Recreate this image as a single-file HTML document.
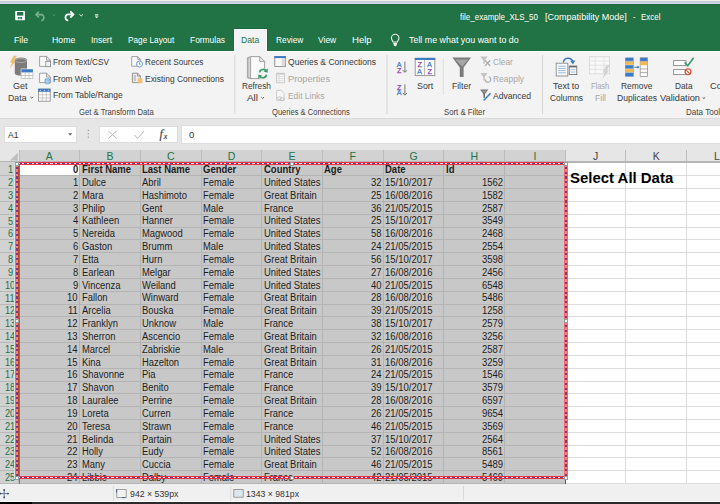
<!DOCTYPE html>
<html><head><meta charset="utf-8"><style>
html,body{margin:0;padding:0;}
body{width:720px;height:504px;overflow:hidden;position:relative;background:#ffffff;font-family:"Liberation Sans", sans-serif;}
.a{position:absolute;}
.t{position:absolute;white-space:pre;line-height:1;transform-origin:0 0;font-family:"Liberation Sans", sans-serif;}
svg{position:absolute;overflow:visible;}
</style></head><body>
<!-- top strip -->
<div class="a" style="left:0;top:0;width:720px;height:1px;background:#efefed"></div>
<div class="a" style="left:0;top:1px;width:720px;height:2px;background:#c3cfdb"></div>
<div class="a" style="left:0;top:3px;width:720px;height:1px;background:#d8d8ee"></div>
<div class="a" style="left:0;top:4px;width:720px;height:47px;background:#217346"></div>
<div class="a" style="left:0;top:4px;width:720px;height:1px;background:#1b6a3c"></div>
<!-- ribbon -->
<div class="a" style="left:0;top:51px;width:720px;height:68px;background:#f3f3f3"></div>
<div class="a" style="left:233px;top:28px;width:35px;height:23px;background:#1c6a3f"></div>
<div class="a" style="left:234px;top:29px;width:33px;height:23px;background:#f3f3f3;box-sizing:border-box;border:1px solid #fafafa;border-bottom:none"></div>
<div class="a" style="left:0;top:51px;width:234px;height:1px;background:#fafafa"></div>
<div class="a" style="left:267px;top:51px;width:453px;height:1px;background:#fafafa"></div>
<div class="a" style="left:0;top:118px;width:720px;height:1px;background:#dadada"></div>
<!-- formula area -->
<div class="a" style="left:0;top:119px;width:720px;height:31px;background:#e6e6e6"></div>
<div class="a" style="left:4px;top:126px;width:73px;height:17px;background:#ffffff;box-sizing:border-box;border:1px solid #dcdcdc"></div>
<div class="a" style="left:99px;top:126px;width:79px;height:17px;background:#ffffff;box-sizing:border-box;border:1px solid #dcdcdc"></div>
<div class="a" style="left:181px;top:125px;width:539px;height:19px;background:#ffffff;box-sizing:border-box;border:1px solid #dcdcdc;border-right:none"></div>
<!-- status bar -->
<div class="a" style="left:0;top:484px;width:720px;height:17px;background:#f0f0f0"></div>
<div class="a" style="left:0;top:501px;width:720px;height:1px;background:#ffffff"></div>
<div class="a" style="left:0;top:502px;width:32px;height:2px;background:#000000"></div>
<div class="a" style="left:32px;top:502px;width:688px;height:2px;background:#2b2b2b"></div>
<div class="a" style="left:463px;top:486px;width:1px;height:14px;background:#d8d8d8"></div>
<div class="a" style="left:19px;top:162px;width:701px;height:322px;background:#ffffff"></div>
<div class="a" style="left:19px;top:162px;width:546.22px;height:322px;background:#c8c8c8"></div>
<div class="a" style="left:19px;top:162px;width:60.69px;height:13px;background:#ffffff"></div>
<div class="a" style="left:0;top:150px;width:720px;height:12px;background:#e6e6e6"></div>
<div class="a" style="left:19px;top:150px;width:546.21px;height:12px;background:#d2d2d2"></div>
<div class="a" style="left:0;top:162px;width:19px;height:322px;background:#d2d2d2"></div>
<div class="a" style="left:19px;top:150px;width:1px;height:12px;background:#bcbcbc"></div>
<div class="a" style="left:79px;top:150px;width:1px;height:12px;background:#bcbcbc"></div>
<div class="a" style="left:79px;top:162px;width:1px;height:322px;background:#b4b4b4"></div>
<div class="a" style="left:140px;top:150px;width:1px;height:12px;background:#bcbcbc"></div>
<div class="a" style="left:140px;top:162px;width:1px;height:322px;background:#b4b4b4"></div>
<div class="a" style="left:201px;top:150px;width:1px;height:12px;background:#bcbcbc"></div>
<div class="a" style="left:201px;top:162px;width:1px;height:322px;background:#b4b4b4"></div>
<div class="a" style="left:261px;top:150px;width:1px;height:12px;background:#bcbcbc"></div>
<div class="a" style="left:261px;top:162px;width:1px;height:322px;background:#b4b4b4"></div>
<div class="a" style="left:322px;top:150px;width:1px;height:12px;background:#bcbcbc"></div>
<div class="a" style="left:322px;top:162px;width:1px;height:322px;background:#b4b4b4"></div>
<div class="a" style="left:383px;top:150px;width:1px;height:12px;background:#bcbcbc"></div>
<div class="a" style="left:383px;top:162px;width:1px;height:322px;background:#b4b4b4"></div>
<div class="a" style="left:443px;top:150px;width:1px;height:12px;background:#bcbcbc"></div>
<div class="a" style="left:443px;top:162px;width:1px;height:322px;background:#b4b4b4"></div>
<div class="a" style="left:504px;top:150px;width:1px;height:12px;background:#bcbcbc"></div>
<div class="a" style="left:504px;top:162px;width:1px;height:322px;background:#b4b4b4"></div>
<div class="a" style="left:565px;top:150px;width:1px;height:12px;background:#bcbcbc"></div>
<div class="a" style="left:625px;top:150px;width:1px;height:12px;background:#bcbcbc"></div>
<div class="a" style="left:625px;top:162px;width:1px;height:322px;background:#dcdcdc"></div>
<div class="a" style="left:686px;top:150px;width:1px;height:12px;background:#bcbcbc"></div>
<div class="a" style="left:686px;top:162px;width:1px;height:322px;background:#dcdcdc"></div>
<div class="a" style="left:0px;top:175px;width:19px;height:1px;background:#b8b8b8"></div>
<div class="a" style="left:19px;top:175px;width:546.21px;height:1px;background:#b4b4b4"></div>
<div class="a" style="left:565.22px;top:175px;width:154.78px;height:1px;background:#dcdcdc"></div>
<div class="a" style="left:0px;top:188px;width:19px;height:1px;background:#b8b8b8"></div>
<div class="a" style="left:19px;top:188px;width:546.21px;height:1px;background:#b4b4b4"></div>
<div class="a" style="left:565.22px;top:188px;width:154.78px;height:1px;background:#dcdcdc"></div>
<div class="a" style="left:0px;top:201px;width:19px;height:1px;background:#b8b8b8"></div>
<div class="a" style="left:19px;top:201px;width:546.21px;height:1px;background:#b4b4b4"></div>
<div class="a" style="left:565.22px;top:201px;width:154.78px;height:1px;background:#dcdcdc"></div>
<div class="a" style="left:0px;top:214px;width:19px;height:1px;background:#b8b8b8"></div>
<div class="a" style="left:19px;top:214px;width:546.21px;height:1px;background:#b4b4b4"></div>
<div class="a" style="left:565.22px;top:214px;width:154.78px;height:1px;background:#dcdcdc"></div>
<div class="a" style="left:0px;top:227px;width:19px;height:1px;background:#b8b8b8"></div>
<div class="a" style="left:19px;top:227px;width:546.21px;height:1px;background:#b4b4b4"></div>
<div class="a" style="left:565.22px;top:227px;width:154.78px;height:1px;background:#dcdcdc"></div>
<div class="a" style="left:0px;top:239px;width:19px;height:1px;background:#b8b8b8"></div>
<div class="a" style="left:19px;top:239px;width:546.21px;height:1px;background:#b4b4b4"></div>
<div class="a" style="left:565.22px;top:239px;width:154.78px;height:1px;background:#dcdcdc"></div>
<div class="a" style="left:0px;top:252px;width:19px;height:1px;background:#b8b8b8"></div>
<div class="a" style="left:19px;top:252px;width:546.21px;height:1px;background:#b4b4b4"></div>
<div class="a" style="left:565.22px;top:252px;width:154.78px;height:1px;background:#dcdcdc"></div>
<div class="a" style="left:0px;top:265px;width:19px;height:1px;background:#b8b8b8"></div>
<div class="a" style="left:19px;top:265px;width:546.21px;height:1px;background:#b4b4b4"></div>
<div class="a" style="left:565.22px;top:265px;width:154.78px;height:1px;background:#dcdcdc"></div>
<div class="a" style="left:0px;top:278px;width:19px;height:1px;background:#b8b8b8"></div>
<div class="a" style="left:19px;top:278px;width:546.21px;height:1px;background:#b4b4b4"></div>
<div class="a" style="left:565.22px;top:278px;width:154.78px;height:1px;background:#dcdcdc"></div>
<div class="a" style="left:0px;top:291px;width:19px;height:1px;background:#b8b8b8"></div>
<div class="a" style="left:19px;top:291px;width:546.21px;height:1px;background:#b4b4b4"></div>
<div class="a" style="left:565.22px;top:291px;width:154.78px;height:1px;background:#dcdcdc"></div>
<div class="a" style="left:0px;top:304px;width:19px;height:1px;background:#b8b8b8"></div>
<div class="a" style="left:19px;top:304px;width:546.21px;height:1px;background:#b4b4b4"></div>
<div class="a" style="left:565.22px;top:304px;width:154.78px;height:1px;background:#dcdcdc"></div>
<div class="a" style="left:0px;top:316px;width:19px;height:1px;background:#b8b8b8"></div>
<div class="a" style="left:19px;top:316px;width:546.21px;height:1px;background:#b4b4b4"></div>
<div class="a" style="left:565.22px;top:316px;width:154.78px;height:1px;background:#dcdcdc"></div>
<div class="a" style="left:0px;top:329px;width:19px;height:1px;background:#b8b8b8"></div>
<div class="a" style="left:19px;top:329px;width:546.21px;height:1px;background:#b4b4b4"></div>
<div class="a" style="left:565.22px;top:329px;width:154.78px;height:1px;background:#dcdcdc"></div>
<div class="a" style="left:0px;top:342px;width:19px;height:1px;background:#b8b8b8"></div>
<div class="a" style="left:19px;top:342px;width:546.21px;height:1px;background:#b4b4b4"></div>
<div class="a" style="left:565.22px;top:342px;width:154.78px;height:1px;background:#dcdcdc"></div>
<div class="a" style="left:0px;top:355px;width:19px;height:1px;background:#b8b8b8"></div>
<div class="a" style="left:19px;top:355px;width:546.21px;height:1px;background:#b4b4b4"></div>
<div class="a" style="left:565.22px;top:355px;width:154.78px;height:1px;background:#dcdcdc"></div>
<div class="a" style="left:0px;top:368px;width:19px;height:1px;background:#b8b8b8"></div>
<div class="a" style="left:19px;top:368px;width:546.21px;height:1px;background:#b4b4b4"></div>
<div class="a" style="left:565.22px;top:368px;width:154.78px;height:1px;background:#dcdcdc"></div>
<div class="a" style="left:0px;top:381px;width:19px;height:1px;background:#b8b8b8"></div>
<div class="a" style="left:19px;top:381px;width:546.21px;height:1px;background:#b4b4b4"></div>
<div class="a" style="left:565.22px;top:381px;width:154.78px;height:1px;background:#dcdcdc"></div>
<div class="a" style="left:0px;top:393px;width:19px;height:1px;background:#b8b8b8"></div>
<div class="a" style="left:19px;top:393px;width:546.21px;height:1px;background:#b4b4b4"></div>
<div class="a" style="left:565.22px;top:393px;width:154.78px;height:1px;background:#dcdcdc"></div>
<div class="a" style="left:0px;top:406px;width:19px;height:1px;background:#b8b8b8"></div>
<div class="a" style="left:19px;top:406px;width:546.21px;height:1px;background:#b4b4b4"></div>
<div class="a" style="left:565.22px;top:406px;width:154.78px;height:1px;background:#dcdcdc"></div>
<div class="a" style="left:0px;top:419px;width:19px;height:1px;background:#b8b8b8"></div>
<div class="a" style="left:19px;top:419px;width:546.21px;height:1px;background:#b4b4b4"></div>
<div class="a" style="left:565.22px;top:419px;width:154.78px;height:1px;background:#dcdcdc"></div>
<div class="a" style="left:0px;top:432px;width:19px;height:1px;background:#b8b8b8"></div>
<div class="a" style="left:19px;top:432px;width:546.21px;height:1px;background:#b4b4b4"></div>
<div class="a" style="left:565.22px;top:432px;width:154.78px;height:1px;background:#dcdcdc"></div>
<div class="a" style="left:0px;top:445px;width:19px;height:1px;background:#b8b8b8"></div>
<div class="a" style="left:19px;top:445px;width:546.21px;height:1px;background:#b4b4b4"></div>
<div class="a" style="left:565.22px;top:445px;width:154.78px;height:1px;background:#dcdcdc"></div>
<div class="a" style="left:0px;top:457px;width:19px;height:1px;background:#b8b8b8"></div>
<div class="a" style="left:19px;top:457px;width:546.21px;height:1px;background:#b4b4b4"></div>
<div class="a" style="left:565.22px;top:457px;width:154.78px;height:1px;background:#dcdcdc"></div>
<div class="a" style="left:0px;top:470px;width:19px;height:1px;background:#b8b8b8"></div>
<div class="a" style="left:19px;top:470px;width:546.21px;height:1px;background:#b4b4b4"></div>
<div class="a" style="left:565.22px;top:470px;width:154.78px;height:1px;background:#dcdcdc"></div>
<div class="a" style="left:0px;top:483px;width:19px;height:1px;background:#b8b8b8"></div>
<div class="a" style="left:19px;top:483px;width:546.21px;height:1px;background:#b4b4b4"></div>
<div class="a" style="left:565.22px;top:483px;width:154.78px;height:1px;background:#dcdcdc"></div>
<div class="a" style="left:0;top:161px;width:720px;height:1px;background:#b4b4b4"></div>
<div class="a" style="left:565px;top:162px;width:155px;height:1px;background:#b4b4b4"></div>
<div class="a" style="left:18px;top:162px;width:1px;height:322px;background:#b4b4b4"></div><svg width="720" height="504" viewBox="0 0 720 504" style="left:0;top:0">
<!-- QAT: save -->
<rect x="15.2" y="11" width="9.8" height="9.2" rx="0.6" fill="#ffffff"/>
<rect x="17.1" y="12" width="6.2" height="3.6" fill="#217346"/>
<rect x="17.9" y="17.1" width="4.2" height="2.1" fill="#217346"/>
<rect x="19.4" y="17.6" width="1" height="1.6" fill="#ffffff"/>
<!-- undo (disabled) -->
<path d="M38.5 12.2 L36 14.6 L38.5 17 M36.3 14.6 H42 A3.3 3.3 0 0 1 42 20.6" fill="none" stroke="#78b08e" stroke-width="1.6" stroke-linecap="round" stroke-linejoin="round"/>
<path d="M52.6 14.4 L54 15.8 L55.4 14.4" fill="none" stroke="#5f9c78" stroke-width="0.9"/>
<!-- redo -->
<path d="M70.8 11.8 L73.6 14.4 L70.8 17 M73.3 14.4 H67.5 A3.2 3.2 0 0 0 67.5 20.4" fill="none" stroke="#fff" stroke-width="1.8" stroke-linecap="round" stroke-linejoin="round"/>
<path d="M79.4 14.3 L81.2 16 L83 14.3" fill="none" stroke="#e6efe9" stroke-width="1"/>
<!-- customize -->
<rect x="95" y="14" width="3.2" height="1" fill="#b8d4c2"/>
<rect x="95" y="15.3" width="3.2" height="1" fill="#b8d4c2"/>
<path d="M95 16.6 H98.3 L96.65 18.3 Z" fill="#fff"/>
<!-- lightbulb -->
<path d="M393 42 C392.7 40.4 391.4 39.6 391.4 38 A3.8 3.8 0 0 1 399 38 C399 39.6 397.7 40.4 397.4 42 Z" fill="none" stroke="#e8f0ea" stroke-width="1.1"/>
<path d="M393.2 42.8 H397.2 L396.6 45.6 L395.2 46.5 L393.8 45.6 Z" fill="#e8f0ea"/>

<!-- Get Data -->
<path d="M13.6 55.8 L16.9 55.8 L14.3 60.2 L16.3 60.2 L9.8 68.8 L12.1 62.4 L10 62.4 Z" fill="#f2bf6e"/>
<path d="M14.8 60.2 A6.1 2.6 0 0 1 27 60.2 V73.2 A6.1 2.6 0 0 1 14.8 73.2 Z" fill="#7b7b7b"/>
<ellipse cx="20.9" cy="60.6" rx="5.6" ry="2" fill="none" stroke="#b4b4b4" stroke-width="0.8"/>
<rect x="20.8" y="68.6" width="12.4" height="10.4" fill="#ffffff"/>
<rect x="21.3" y="69.2" width="11.6" height="3.2" fill="#3d7ac4"/>
<path d="M21.3 72.4 V78.5 H32.9 V72.4 M21.3 75.5 H32.9 M25.2 72.4 V78.5 M29 72.4 V78.5" fill="none" stroke="#b2b2b2" stroke-width="0.7"/>
<path d="M30.4 96.9 L31.8 98.2 L33.2 96.9" fill="none" stroke="#505050" stroke-width="0.95"/>

<!-- From Text/CSV -->
<path d="M39.6 56.4 H46.5 L50.4 60.2 V66.4 H39.6 Z M46.5 56.4 V60.2 H50.4" fill="#fafafa" stroke="#8c8c8c" stroke-width="0.8"/>
<rect x="45.8" y="61.5" width="4.8" height="5.2" fill="#f3f3f3" stroke="#8a8a8a" stroke-width="0.8"/>
<!-- From Web -->
<path d="M39.6 73.2 H46.5 L50.4 77 V82.6 H39.6 Z M46.5 73.2 V77 H50.4" fill="#fafafa" stroke="#8c8c8c" stroke-width="0.8"/>
<circle cx="47.6" cy="81.2" r="3.1" fill="#6aa0dc"/>
<path d="M44.6 81.2 H50.6 M47.6 78.2 V84.2" stroke="#d9e8f7" stroke-width="0.5"/>
<ellipse cx="47.6" cy="81.2" rx="1.3" ry="3" fill="none" stroke="#d9e8f7" stroke-width="0.5"/>
<!-- From Table/Range -->
<rect x="38.4" y="89" width="11.8" height="12.2" fill="#fafafa" stroke="#8a8a8a" stroke-width="0.8"/>
<rect x="38.2" y="88.8" width="12.2" height="3" fill="#3d7ac4"/>
<path d="M38.4 94.8 H50.2 M38.4 98 H50.2 M42.3 91.8 V101.2 M46.3 91.8 V101.2" stroke="#b0b0b0" stroke-width="0.6"/>
<circle cx="40.3" cy="90.3" r="0.5" fill="#fff"/><circle cx="44.3" cy="90.3" r="0.5" fill="#fff"/><circle cx="48.3" cy="90.3" r="0.5" fill="#fff"/>

<!-- Recent Sources -->
<path d="M131.7 56.6 H137.6 L140.4 59.4 V66.2 H131.7 Z M137.6 56.6 V59.4 H140.4" fill="#fafafa" stroke="#8c8c8c" stroke-width="0.8"/>
<circle cx="139.5" cy="64" r="3" fill="#ffffff" stroke="#5a93d4" stroke-width="0.9"/>
<path d="M139.5 62.4 V64.2 H140.9" fill="none" stroke="#555" stroke-width="0.6"/>
<!-- Existing connections -->
<path d="M132.4 73.2 H137.6 L140.4 76 V82.6 H132.4 Z M137.6 73.2 V76 H140.4" fill="#ececec" stroke="#8a8a8a" stroke-width="0.9"/>
<rect x="133.8" y="75" width="2.2" height="6" fill="#c8c8c8"/>
<rect x="137.8" y="78.2" width="4.6" height="5" rx="0.5" fill="#f0c070"/>

<!-- separators -->
<rect x="234.3" y="55" width="1" height="59" fill="#d6d6d6"/>
<rect x="386.5" y="55" width="1" height="59" fill="#d6d6d6"/>
<rect x="542" y="55" width="1" height="59" fill="#d6d6d6"/>
<rect x="442.8" y="58" width="1" height="37" fill="#dedede"/>

<!-- Refresh All -->
<path d="M247.4 57.8 H250 V77.8 H247.4 Z" fill="#fafafa" stroke="#8a8a8a" stroke-width="0.8"/>
<path d="M248.9 57 H251.5 V78.4 H248.9 Z" fill="#fafafa" stroke="#8a8a8a" stroke-width="0.8"/>
<path d="M250.6 56.6 H259.8 L264.6 61.4 V78.6 H250.6 Z M259.8 56.6 V61.4 H264.6" fill="#fafafa" stroke="#8a8a8a" stroke-width="0.8"/>
<circle cx="263" cy="73.6" r="5.6" fill="#f3f3f3"/>
<path d="M259.4 72.4 A3.9 3.9 0 0 1 266.6 71.4 M266.6 74.8 A3.9 3.9 0 0 1 259.4 75.8" fill="none" stroke="#3c9a6a" stroke-width="1.6"/>
<path d="M267.9 68.6 L267.6 72.8 L263.6 71.4 Z M258.1 78.6 L258.4 74.4 L262.4 75.8 Z" fill="#3c9a6a"/>
<path d="M261.4 97.2 L262.7 98.4 L264 97.2" fill="none" stroke="#505050" stroke-width="0.95"/>

<!-- Queries & Connections icon -->
<rect x="274.8" y="56.5" width="10.6" height="10" fill="#fafafa" stroke="#8a8a8a" stroke-width="0.9"/>
<rect x="274.4" y="56.1" width="11.4" height="2" fill="#3d7ac4"/>
<rect x="281.6" y="58.2" width="3.6" height="8" fill="#dadada"/>
<!-- Properties icon -->
<rect x="276.6" y="73.2" width="7.8" height="9.6" fill="#f7f7f7" stroke="#c2c2c2" stroke-width="0.8"/>
<rect x="276.6" y="73.2" width="7.8" height="1.4" fill="#c8c8c8"/><path d="M276.6 76.6 H284.4 M276.6 78.6 H284.4 M276.6 80.6 H284.4 M279.2 74.6 V82.8" stroke="#d2d2d2" stroke-width="0.6"/>
<!-- Edit Links icon -->
<path d="M276.6 90.4 H281.2 L284.2 93.4 V100.4 H276.6 Z" fill="#f7f7f7" stroke="#c2c2c2" stroke-width="0.8"/>
<rect x="277.6" y="96.8" width="3.8" height="2.6" rx="1.2" fill="none" stroke="#bdbdbd" stroke-width="0.8"/>
<rect x="280.4" y="97.8" width="3.8" height="2.6" rx="1.2" fill="none" stroke="#bdbdbd" stroke-width="0.8"/>

<!-- Sort A-Z small -->
<text x="396.8" y="66.9" font-family="Liberation Sans" font-size="7.2" fill="#3d7ac4" stroke="#3d7ac4" stroke-width="0.25">A</text>
<text x="397.1" y="72.6" font-family="Liberation Sans" font-size="7.2" fill="#8c3cb4" stroke="#8c3cb4" stroke-width="0.25">Z</text>
<path d="M404.9 61.6 V72" stroke="#666" stroke-width="0.9"/>
<path d="M402.8 70.2 L404.9 72.4 L407 70.2" fill="none" stroke="#666" stroke-width="0.9"/>
<text x="397.1" y="89.6" font-family="Liberation Sans" font-size="7.2" fill="#8c3cb4" stroke="#8c3cb4" stroke-width="0.25">Z</text>
<text x="396.8" y="95.4" font-family="Liberation Sans" font-size="7.2" fill="#3d7ac4" stroke="#3d7ac4" stroke-width="0.25">A</text>
<path d="M404.9 84.4 V94.8" stroke="#666" stroke-width="0.9"/>
<path d="M402.8 93 L404.9 95.2 L407 93" fill="none" stroke="#666" stroke-width="0.9"/>
<!-- Sort big -->
<rect x="415.2" y="58.6" width="19.6" height="17" fill="#ffffff" stroke="#8e8e8e" stroke-width="0.9"/>
<rect x="414.8" y="57.8" width="20.4" height="2.2" fill="#3d7ac4"/>
<path d="M424.6 60 V75.6" stroke="#a0a0a0" stroke-width="0.8"/>
<text x="417.4" y="67.2" font-family="Liberation Sans" font-size="7.4" fill="#8c3cb4" stroke="#8c3cb4" stroke-width="0.25">Z</text>
<text x="417" y="74.3" font-family="Liberation Sans" font-size="7.4" fill="#3d7ac4" stroke="#3d7ac4" stroke-width="0.25">A</text>
<text x="427" y="67.2" font-family="Liberation Sans" font-size="7.4" fill="#3d7ac4" stroke="#3d7ac4" stroke-width="0.25">A</text>
<text x="427.4" y="74.3" font-family="Liberation Sans" font-size="7.4" fill="#8c3cb4" stroke="#8c3cb4" stroke-width="0.25">Z</text>

<!-- Filter funnel -->
<path d="M452.4 57.4 H471 L463.6 67.4 V77 H459.8 V67.4 Z" fill="#7b7b7b"/>
<path d="M455.2 59.4 H468.2 L462.2 66.6 Z" fill="#a6a6a6"/>
<!-- Clear -->
<path d="M480.4 56.4 H487.6 L484.8 60.4 V63.8 H483.2 V60.4 Z" fill="#c4c4c4"/>
<path d="M485 60.4 L490.2 65.8 M490.2 60.4 L485 65.8" stroke="#a2a2a2" stroke-width="1.1"/>
<!-- Reapply -->
<path d="M480.4 73 H487.6 L484.8 77 V80.4 H483.2 V77 Z" fill="#c4c4c4"/>
<path d="M485.2 79.6 A2.8 2.8 0 1 0 488.8 76.8" fill="none" stroke="#b0b0b0" stroke-width="1.2"/>
<!-- Advanced -->
<path d="M480.2 89.6 H488.2 L485 94 V97.8 H483.4 V94 Z" fill="#6e6e6e"/><path d="M481.8 90.6 H486.6 L484.2 93.2 Z" fill="#9a9a9a"/>
<path d="M483.6 100.6 L490.6 93.2" stroke="#3d7ac4" stroke-width="1.5"/>

<!-- Text to Columns -->
<rect x="556.2" y="63.2" width="11.6" height="12.8" fill="#fafafa" stroke="#8a8a8a" stroke-width="0.9"/>
<path d="M558.2 66.2 H565.8 M558.2 68.4 H565.8 M558.2 70.6 H565.8 M558.2 72.8 H565.8" stroke="#8fb3dd" stroke-width="0.9"/>
<rect x="569.2" y="66" width="7.6" height="8.6" fill="#fafafa" stroke="#6a6a6a" stroke-width="0.8"/>
<rect x="569.2" y="66" width="7.6" height="1.4" fill="#6a6a6a"/>
<path d="M570.6 69.6 H575.4 M570.6 72 H575.4" stroke="#8fb3dd" stroke-width="0.8"/>
<path d="M563.4 62.4 C563.8 57.6 571 56.4 572.8 61.8" fill="none" stroke="#3d7ac4" stroke-width="1.6"/>
<path d="M570.2 60.8 L572.9 64.4 L575.4 60.6 Z" fill="#3d7ac4"/>
<!-- Flash Fill -->
<rect x="589.6" y="56.8" width="20" height="17" fill="#f8f8f8" stroke="#d4d4d4" stroke-width="0.8"/>
<path d="M589.6 61 H609.6 M589.6 65.2 H609.6 M589.6 69.4 H609.6 M595.2 56.8 V73.8 M604 56.8 V73.8" stroke="#dcdcdc" stroke-width="0.7"/>
<path d="M606.4 65.2 L609.8 65.2 L606.6 70.6 L609 70.6 L602.6 79 L604.6 72.4 L602.6 72.4 Z" fill="#d2d2d2"/>

<!-- Remove Duplicates -->
<rect x="625.2" y="57.6" width="8.4" height="19" fill="#3d7ac4"/>
<rect x="625.2" y="61.4" width="8.4" height="3.6" fill="#f2b851"/>
<rect x="625.2" y="68.8" width="8.4" height="3.6" fill="#f2b851"/>
<path d="M625.2 61.2 H633.6 M625.2 65 H633.6 M625.2 68.8 H633.6 M625.2 72.6 H633.6" stroke="#ffffff" stroke-width="0.4"/>
<rect x="640.2" y="57.8" width="7.2" height="18.6" fill="#ffffff" stroke="#8a8a8a" stroke-width="0.7"/>
<rect x="640.2" y="57.8" width="7.2" height="3.7" fill="#3d7ac4"/>
<rect x="640.2" y="61.5" width="7.2" height="3.7" fill="#f2b851"/>
<path d="M640.2 68.9 H647.4 M640.2 72.6 H647.4" stroke="#8a8a8a" stroke-width="0.7"/>
<path d="M634.4 67.2 H638.4" stroke="#3d7ac4" stroke-width="1"/>
<path d="M637.4 65.6 L639.6 67.2 L637.4 68.8 Z" fill="#3d7ac4"/>

<!-- Data Validation -->
<rect x="673.6" y="60.6" width="12.4" height="5" fill="#ffffff" stroke="#8a8a8a" stroke-width="0.9"/>
<rect x="673.6" y="69.6" width="12.4" height="5" fill="#ffffff" stroke="#8a8a8a" stroke-width="0.9"/>
<path d="M684.6 62.4 L687.8 65.8 L693.6 57.8" fill="none" stroke="#3c9a6a" stroke-width="1.6"/>
<circle cx="688" cy="71.8" r="2.9" fill="#ffffff" stroke="#e0553a" stroke-width="1.3"/>
<path d="M686 69.8 L690 73.8" stroke="#e0553a" stroke-width="1.1"/>
<path d="M702.6 97.4 L703.9 98.6 L705.2 97.4" fill="none" stroke="#505050" stroke-width="0.95"/>

<!-- Name box dropdown -->
<path d="M68.2 133.3 H72.2 L70.2 135.4 Z" fill="#555"/>
<!-- dots -->
<circle cx="88.3" cy="130.4" r="0.65" fill="#8a8a8a"/><circle cx="88.3" cy="133.8" r="0.65" fill="#8a8a8a"/><circle cx="88.3" cy="137.2" r="0.65" fill="#8a8a8a"/>
<!-- X check fx -->
<path d="M108.4 131 L116.6 138.4 M116.6 131 L108.4 138.4" stroke="#b0b0b0" stroke-width="0.9"/>
<path d="M134.4 135 L137.6 138.4 L144 131" fill="none" stroke="#b0b0b0" stroke-width="0.9"/>
<text x="159.6" y="138.4" font-family="Liberation Serif" font-style="italic" font-size="12" fill="#444" stroke="#444" stroke-width="0.2">f</text>
<text x="163.8" y="139.2" font-family="Liberation Serif" font-style="italic" font-size="8" fill="#444" stroke="#444" stroke-width="0.2">x</text>

<!-- select all triangle -->
<path d="M17.8 152.8 V160.6 H10 Z" fill="#bdbdbd"/>

<!-- status bar -->
<path d="M4.2 489.8 V497.6 M0 493.6 H8.6" stroke="#5a6e88" stroke-width="0.9"/>
<circle cx="4.2" cy="490" r="0.9" fill="#34496a"/><circle cx="4.2" cy="497.4" r="0.9" fill="#34496a"/>
<circle cx="0.6" cy="493.6" r="0.9" fill="#34496a"/><circle cx="7.9" cy="493.6" r="0.9" fill="#34496a"/>
<rect x="113" y="486" width="1" height="15" fill="#dcdcdc"/>
<rect x="230.3" y="486" width="1" height="15" fill="#dcdcdc"/>
<rect x="116.8" y="489.6" width="9.4" height="7.8" fill="#f2f2f2" stroke="#8a8a8a" stroke-width="0.8"/>
<path d="M116.6 489.2 V492.6 M125.6 497.6 H122" stroke="#4a6080" stroke-width="1"/>
<rect x="233.8" y="489.4" width="9.4" height="7.8" fill="#dce6ef" stroke="#8a8a8a" stroke-width="0.8"/>
</svg>

<div id="txt">
<span class="t" style="left:460.30px;top:12.07px;font-size:9.6px;color:#ffffff;transform:scaleX(0.8356);">file_example_XLS_50</span>
<span class="t" style="left:544.50px;top:12.07px;font-size:9.6px;color:#ffffff;transform:scaleX(0.9411);">[Compatibility Mode]</span>
<span class="t" style="left:633.00px;top:12.07px;font-size:9.6px;color:#ffffff;transform:scaleX(0.7493);">-</span>
<span class="t" style="left:640.50px;top:12.07px;font-size:9.6px;color:#ffffff;transform:scaleX(0.8309);">Excel</span>
<span class="t" style="left:14.25px;top:36.13px;font-size:9.3px;color:#ffffff;transform:scaleX(0.9343);">File</span>
<span class="t" style="left:51.75px;top:36.13px;font-size:9.3px;color:#ffffff;transform:scaleX(0.9370);">Home</span>
<span class="t" style="left:90.75px;top:36.13px;font-size:9.3px;color:#ffffff;transform:scaleX(0.9026);">Insert</span>
<span class="t" style="left:127.50px;top:36.13px;font-size:9.3px;color:#ffffff;transform:scaleX(0.8857);">Page Layout</span>
<span class="t" style="left:190.00px;top:36.13px;font-size:9.3px;color:#ffffff;transform:scaleX(0.9032);">Formulas</span>
<span class="t" style="left:275.50px;top:36.13px;font-size:9.3px;color:#ffffff;transform:scaleX(0.8955);">Review</span>
<span class="t" style="left:318.40px;top:36.13px;font-size:9.3px;color:#ffffff;transform:scaleX(0.9107);">View</span>
<span class="t" style="left:352.00px;top:36.13px;font-size:9.3px;color:#ffffff;transform:scaleX(1.0301);">Help</span>
<span class="t" style="left:409.00px;top:36.13px;font-size:9.3px;color:#ffffff;transform:scaleX(0.9561);">Tell me what you want to do</span>
<span class="t" style="left:240.75px;top:36.13px;font-size:9.3px;color:#217346;transform:scaleX(0.9292);">Data</span>
<span class="t" style="left:13.00px;top:80.97px;font-size:9.6px;color:#3a3a3a;transform:scaleX(0.9374);">Get</span>
<span class="t" style="left:8.00px;top:93.37px;font-size:9.6px;color:#3a3a3a;transform:scaleX(0.9129);">Data</span>
<span class="t" style="left:53.00px;top:56.87px;font-size:9.6px;color:#3a3a3a;transform:scaleX(0.8632);">From Text/CSV</span>
<span class="t" style="left:53.00px;top:73.67px;font-size:9.6px;color:#3a3a3a;transform:scaleX(0.8720);">From Web</span>
<span class="t" style="left:53.00px;top:90.37px;font-size:9.6px;color:#3a3a3a;transform:scaleX(0.8863);">From Table/Range</span>
<span class="t" style="left:144.70px;top:56.87px;font-size:9.6px;color:#3a3a3a;transform:scaleX(0.8540);">Recent Sources</span>
<span class="t" style="left:144.70px;top:73.67px;font-size:9.6px;color:#3a3a3a;transform:scaleX(0.8818);">Existing Connections</span>
<span class="t" style="left:79.30px;top:106.97px;font-size:9.6px;color:#444444;transform:scaleX(0.8005);">Get &amp; Transform Data</span>
<span class="t" style="left:241.50px;top:80.67px;font-size:9.6px;color:#3a3a3a;transform:scaleX(0.8603);">Refresh</span>
<span class="t" style="left:247.00px;top:93.37px;font-size:9.6px;color:#3a3a3a;transform:scaleX(1.0307);">All</span>
<span class="t" style="left:288.00px;top:56.87px;font-size:9.6px;color:#3a3a3a;transform:scaleX(0.8920);">Queries &amp; Connections</span>
<span class="t" style="left:288.00px;top:73.87px;font-size:9.6px;color:#a6a6a6;transform:scaleX(0.9603);">Properties</span>
<span class="t" style="left:288.00px;top:90.67px;font-size:9.6px;color:#a6a6a6;transform:scaleX(0.8775);">Edit Links</span>
<span class="t" style="left:271.80px;top:107.17px;font-size:9.6px;color:#444444;transform:scaleX(0.7886);">Queries &amp; Connections</span>
<span class="t" style="left:416.50px;top:80.67px;font-size:9.6px;color:#3a3a3a;transform:scaleX(0.9256);">Sort</span>
<span class="t" style="left:452.00px;top:80.67px;font-size:9.6px;color:#3a3a3a;transform:scaleX(0.8908);">Filter</span>
<span class="t" style="left:493.00px;top:56.87px;font-size:9.6px;color:#a6a6a6;transform:scaleX(0.8632);">Clear</span>
<span class="t" style="left:493.00px;top:73.87px;font-size:9.6px;color:#a6a6a6;transform:scaleX(0.8806);">Reapply</span>
<span class="t" style="left:493.00px;top:90.67px;font-size:9.6px;color:#3a3a3a;transform:scaleX(0.8905);">Advanced</span>
<span class="t" style="left:444.00px;top:107.17px;font-size:9.6px;color:#444444;transform:scaleX(0.8094);">Sort &amp; Filter</span>
<span class="t" style="left:553.00px;top:81.07px;font-size:9.6px;color:#3a3a3a;transform:scaleX(0.9305);">Text to</span>
<span class="t" style="left:550.00px;top:93.37px;font-size:9.6px;color:#3a3a3a;transform:scaleX(0.8716);">Columns</span>
<span class="t" style="left:590.50px;top:81.07px;font-size:9.6px;color:#a6a6a6;transform:scaleX(0.7776);">Flash</span>
<span class="t" style="left:594.50px;top:93.37px;font-size:9.6px;color:#a6a6a6;transform:scaleX(0.8968);">Fill</span>
<span class="t" style="left:620.50px;top:81.07px;font-size:9.6px;color:#3a3a3a;transform:scaleX(0.8815);">Remove</span>
<span class="t" style="left:617.00px;top:93.37px;font-size:9.6px;color:#3a3a3a;transform:scaleX(0.8929);">Duplicates</span>
<span class="t" style="left:675.00px;top:81.07px;font-size:9.6px;color:#3a3a3a;transform:scaleX(0.8635);">Data</span>
<span class="t" style="left:660.00px;top:93.37px;font-size:9.6px;color:#3a3a3a;transform:scaleX(0.9653);">Validation</span>
<span class="t" style="left:709.50px;top:81.07px;font-size:9.6px;color:#3a3a3a;transform:scaleX(0.9783);">Co</span>
<span class="t" style="left:685.75px;top:107.17px;font-size:9.6px;color:#444444;transform:scaleX(0.8415);">Data Tools</span>
<span class="t" style="left:7.70px;top:129.96px;font-size:9.5px;color:#333333;transform:scaleX(0.8946);">A1</span>
<span class="t" style="left:189.00px;top:129.96px;font-size:9.5px;color:#333333;">0</span>
<span class="t" style="left:45.85px;top:150.91px;font-size:10.5px;color:#217346;">A</span>
<span class="t" style="left:106.54px;top:150.91px;font-size:10.5px;color:#217346;">B</span>
<span class="t" style="left:166.94px;top:150.91px;font-size:10.5px;color:#217346;">C</span>
<span class="t" style="left:227.63px;top:150.91px;font-size:10.5px;color:#217346;">D</span>
<span class="t" style="left:288.61px;top:150.91px;font-size:10.5px;color:#217346;">E</span>
<span class="t" style="left:349.59px;top:150.91px;font-size:10.5px;color:#217346;">F</span>
<span class="t" style="left:409.41px;top:150.91px;font-size:10.5px;color:#217346;">G</span>
<span class="t" style="left:470.39px;top:150.91px;font-size:10.5px;color:#217346;">H</span>
<span class="t" style="left:533.41px;top:150.91px;font-size:10.5px;color:#217346;">I</span>
<span class="t" style="left:592.94px;top:150.91px;font-size:10.5px;color:#444444;">J</span>
<span class="t" style="left:652.75px;top:150.91px;font-size:10.5px;color:#444444;">K</span>
<span class="t" style="left:714.02px;top:150.91px;font-size:10.5px;color:#444444;">L</span>
<span class="t" style="left:7.54px;top:165.26px;font-size:10px;color:#217346;transform:scaleX(0.9200);">1</span>
<span class="t" style="left:7.54px;top:178.09px;font-size:10px;color:#217346;transform:scaleX(0.9200);">2</span>
<span class="t" style="left:7.54px;top:190.91px;font-size:10px;color:#217346;transform:scaleX(0.9200);">3</span>
<span class="t" style="left:7.54px;top:203.74px;font-size:10px;color:#217346;transform:scaleX(0.9200);">4</span>
<span class="t" style="left:7.54px;top:216.56px;font-size:10px;color:#217346;transform:scaleX(0.9200);">5</span>
<span class="t" style="left:7.54px;top:229.39px;font-size:10px;color:#217346;transform:scaleX(0.9200);">6</span>
<span class="t" style="left:7.54px;top:242.22px;font-size:10px;color:#217346;transform:scaleX(0.9200);">7</span>
<span class="t" style="left:7.54px;top:255.04px;font-size:10px;color:#217346;transform:scaleX(0.9200);">8</span>
<span class="t" style="left:7.54px;top:267.87px;font-size:10px;color:#217346;transform:scaleX(0.9200);">9</span>
<span class="t" style="left:4.98px;top:280.69px;font-size:10px;color:#217346;transform:scaleX(0.9200);">10</span>
<span class="t" style="left:5.32px;top:293.52px;font-size:10px;color:#217346;transform:scaleX(0.9200);">11</span>
<span class="t" style="left:4.98px;top:306.35px;font-size:10px;color:#217346;transform:scaleX(0.9200);">12</span>
<span class="t" style="left:4.98px;top:319.17px;font-size:10px;color:#217346;transform:scaleX(0.9200);">13</span>
<span class="t" style="left:4.98px;top:332.00px;font-size:10px;color:#217346;transform:scaleX(0.9200);">14</span>
<span class="t" style="left:4.98px;top:344.82px;font-size:10px;color:#217346;transform:scaleX(0.9200);">15</span>
<span class="t" style="left:4.98px;top:357.65px;font-size:10px;color:#217346;transform:scaleX(0.9200);">16</span>
<span class="t" style="left:4.98px;top:370.48px;font-size:10px;color:#217346;transform:scaleX(0.9200);">17</span>
<span class="t" style="left:4.98px;top:383.30px;font-size:10px;color:#217346;transform:scaleX(0.9200);">18</span>
<span class="t" style="left:4.98px;top:396.13px;font-size:10px;color:#217346;transform:scaleX(0.9200);">19</span>
<span class="t" style="left:4.98px;top:408.95px;font-size:10px;color:#217346;transform:scaleX(0.9200);">20</span>
<span class="t" style="left:4.98px;top:421.78px;font-size:10px;color:#217346;transform:scaleX(0.9200);">21</span>
<span class="t" style="left:4.98px;top:434.61px;font-size:10px;color:#217346;transform:scaleX(0.9200);">22</span>
<span class="t" style="left:4.98px;top:447.43px;font-size:10px;color:#217346;transform:scaleX(0.9200);">23</span>
<span class="t" style="left:4.98px;top:460.26px;font-size:10px;color:#217346;transform:scaleX(0.9200);">24</span>
<span class="t" style="left:4.98px;top:473.09px;font-size:10px;color:#217346;transform:scaleX(0.9200);">25</span>
<span class="t" style="left:72.72px;top:165.16px;font-size:10px;color:#1e1e1e;font-weight:bold;transform:scaleX(0.9500);">0</span>
<span class="t" style="left:81.60px;top:165.16px;font-size:10px;color:#1e1e1e;font-weight:bold;transform:scaleX(0.9500);">First Name</span>
<span class="t" style="left:142.29px;top:165.16px;font-size:10px;color:#1e1e1e;font-weight:bold;transform:scaleX(0.9500);">Last Name</span>
<span class="t" style="left:202.98px;top:165.16px;font-size:10px;color:#1e1e1e;font-weight:bold;transform:scaleX(0.9500);">Gender</span>
<span class="t" style="left:263.67px;top:165.16px;font-size:10px;color:#1e1e1e;font-weight:bold;transform:scaleX(0.9500);">Country</span>
<span class="t" style="left:324.36px;top:165.16px;font-size:10px;color:#1e1e1e;font-weight:bold;transform:scaleX(0.9500);">Age</span>
<span class="t" style="left:385.05px;top:165.16px;font-size:10px;color:#1e1e1e;font-weight:bold;transform:scaleX(0.9500);">Date</span>
<span class="t" style="left:445.74px;top:165.16px;font-size:10px;color:#1e1e1e;font-weight:bold;transform:scaleX(0.9500);">Id</span>
<span class="t" style="left:72.72px;top:177.99px;font-size:10px;color:#1e1e1e;transform:scaleX(0.9500);">1</span>
<span class="t" style="left:81.60px;top:177.99px;font-size:10px;color:#1e1e1e;transform:scaleX(0.9400);">Dulce</span>
<span class="t" style="left:142.29px;top:177.99px;font-size:10px;color:#1e1e1e;transform:scaleX(0.9400);">Abril</span>
<span class="t" style="left:202.98px;top:177.99px;font-size:10px;color:#1e1e1e;transform:scaleX(0.9400);">Female</span>
<span class="t" style="left:263.67px;top:177.99px;font-size:10px;color:#1e1e1e;transform:scaleX(0.9400);">United States</span>
<span class="t" style="left:370.88px;top:177.99px;font-size:10px;color:#1e1e1e;transform:scaleX(0.9500);">32</span>
<span class="t" style="left:385.05px;top:177.99px;font-size:10px;color:#1e1e1e;transform:scaleX(0.9500);">15/10/2017</span>
<span class="t" style="left:481.69px;top:177.99px;font-size:10px;color:#1e1e1e;transform:scaleX(0.9500);">1562</span>
<span class="t" style="left:72.72px;top:190.81px;font-size:10px;color:#1e1e1e;transform:scaleX(0.9500);">2</span>
<span class="t" style="left:81.60px;top:190.81px;font-size:10px;color:#1e1e1e;transform:scaleX(0.9400);">Mara</span>
<span class="t" style="left:142.29px;top:190.81px;font-size:10px;color:#1e1e1e;transform:scaleX(0.9400);">Hashimoto</span>
<span class="t" style="left:202.98px;top:190.81px;font-size:10px;color:#1e1e1e;transform:scaleX(0.9400);">Female</span>
<span class="t" style="left:263.67px;top:190.81px;font-size:10px;color:#1e1e1e;transform:scaleX(0.9400);">Great Britain</span>
<span class="t" style="left:370.88px;top:190.81px;font-size:10px;color:#1e1e1e;transform:scaleX(0.9500);">25</span>
<span class="t" style="left:385.05px;top:190.81px;font-size:10px;color:#1e1e1e;transform:scaleX(0.9500);">16/08/2016</span>
<span class="t" style="left:481.69px;top:190.81px;font-size:10px;color:#1e1e1e;transform:scaleX(0.9500);">1582</span>
<span class="t" style="left:72.72px;top:203.64px;font-size:10px;color:#1e1e1e;transform:scaleX(0.9500);">3</span>
<span class="t" style="left:81.60px;top:203.64px;font-size:10px;color:#1e1e1e;transform:scaleX(0.9400);">Philip</span>
<span class="t" style="left:142.29px;top:203.64px;font-size:10px;color:#1e1e1e;transform:scaleX(0.9400);">Gent</span>
<span class="t" style="left:202.98px;top:203.64px;font-size:10px;color:#1e1e1e;transform:scaleX(0.9400);">Male</span>
<span class="t" style="left:263.67px;top:203.64px;font-size:10px;color:#1e1e1e;transform:scaleX(0.9400);">France</span>
<span class="t" style="left:370.88px;top:203.64px;font-size:10px;color:#1e1e1e;transform:scaleX(0.9500);">36</span>
<span class="t" style="left:385.05px;top:203.64px;font-size:10px;color:#1e1e1e;transform:scaleX(0.9500);">21/05/2015</span>
<span class="t" style="left:481.69px;top:203.64px;font-size:10px;color:#1e1e1e;transform:scaleX(0.9500);">2587</span>
<span class="t" style="left:72.72px;top:216.47px;font-size:10px;color:#1e1e1e;transform:scaleX(0.9500);">4</span>
<span class="t" style="left:81.60px;top:216.47px;font-size:10px;color:#1e1e1e;transform:scaleX(0.9400);">Kathleen</span>
<span class="t" style="left:142.29px;top:216.47px;font-size:10px;color:#1e1e1e;transform:scaleX(0.9400);">Hanner</span>
<span class="t" style="left:202.98px;top:216.47px;font-size:10px;color:#1e1e1e;transform:scaleX(0.9400);">Female</span>
<span class="t" style="left:263.67px;top:216.47px;font-size:10px;color:#1e1e1e;transform:scaleX(0.9400);">United States</span>
<span class="t" style="left:370.88px;top:216.47px;font-size:10px;color:#1e1e1e;transform:scaleX(0.9500);">25</span>
<span class="t" style="left:385.05px;top:216.47px;font-size:10px;color:#1e1e1e;transform:scaleX(0.9500);">15/10/2017</span>
<span class="t" style="left:481.69px;top:216.47px;font-size:10px;color:#1e1e1e;transform:scaleX(0.9500);">3549</span>
<span class="t" style="left:72.72px;top:229.29px;font-size:10px;color:#1e1e1e;transform:scaleX(0.9500);">5</span>
<span class="t" style="left:81.60px;top:229.29px;font-size:10px;color:#1e1e1e;transform:scaleX(0.9400);">Nereida</span>
<span class="t" style="left:142.29px;top:229.29px;font-size:10px;color:#1e1e1e;transform:scaleX(0.9400);">Magwood</span>
<span class="t" style="left:202.98px;top:229.29px;font-size:10px;color:#1e1e1e;transform:scaleX(0.9400);">Female</span>
<span class="t" style="left:263.67px;top:229.29px;font-size:10px;color:#1e1e1e;transform:scaleX(0.9400);">United States</span>
<span class="t" style="left:370.88px;top:229.29px;font-size:10px;color:#1e1e1e;transform:scaleX(0.9500);">58</span>
<span class="t" style="left:385.05px;top:229.29px;font-size:10px;color:#1e1e1e;transform:scaleX(0.9500);">16/08/2016</span>
<span class="t" style="left:481.69px;top:229.29px;font-size:10px;color:#1e1e1e;transform:scaleX(0.9500);">2468</span>
<span class="t" style="left:72.72px;top:242.12px;font-size:10px;color:#1e1e1e;transform:scaleX(0.9500);">6</span>
<span class="t" style="left:81.60px;top:242.12px;font-size:10px;color:#1e1e1e;transform:scaleX(0.9400);">Gaston</span>
<span class="t" style="left:142.29px;top:242.12px;font-size:10px;color:#1e1e1e;transform:scaleX(0.9400);">Brumm</span>
<span class="t" style="left:202.98px;top:242.12px;font-size:10px;color:#1e1e1e;transform:scaleX(0.9400);">Male</span>
<span class="t" style="left:263.67px;top:242.12px;font-size:10px;color:#1e1e1e;transform:scaleX(0.9400);">United States</span>
<span class="t" style="left:370.88px;top:242.12px;font-size:10px;color:#1e1e1e;transform:scaleX(0.9500);">24</span>
<span class="t" style="left:385.05px;top:242.12px;font-size:10px;color:#1e1e1e;transform:scaleX(0.9500);">21/05/2015</span>
<span class="t" style="left:481.69px;top:242.12px;font-size:10px;color:#1e1e1e;transform:scaleX(0.9500);">2554</span>
<span class="t" style="left:72.72px;top:254.94px;font-size:10px;color:#1e1e1e;transform:scaleX(0.9500);">7</span>
<span class="t" style="left:81.60px;top:254.94px;font-size:10px;color:#1e1e1e;transform:scaleX(0.9400);">Etta</span>
<span class="t" style="left:142.29px;top:254.94px;font-size:10px;color:#1e1e1e;transform:scaleX(0.9400);">Hurn</span>
<span class="t" style="left:202.98px;top:254.94px;font-size:10px;color:#1e1e1e;transform:scaleX(0.9400);">Female</span>
<span class="t" style="left:263.67px;top:254.94px;font-size:10px;color:#1e1e1e;transform:scaleX(0.9400);">Great Britain</span>
<span class="t" style="left:370.88px;top:254.94px;font-size:10px;color:#1e1e1e;transform:scaleX(0.9500);">56</span>
<span class="t" style="left:385.05px;top:254.94px;font-size:10px;color:#1e1e1e;transform:scaleX(0.9500);">15/10/2017</span>
<span class="t" style="left:481.69px;top:254.94px;font-size:10px;color:#1e1e1e;transform:scaleX(0.9500);">3598</span>
<span class="t" style="left:72.72px;top:267.77px;font-size:10px;color:#1e1e1e;transform:scaleX(0.9500);">8</span>
<span class="t" style="left:81.60px;top:267.77px;font-size:10px;color:#1e1e1e;transform:scaleX(0.9400);">Earlean</span>
<span class="t" style="left:142.29px;top:267.77px;font-size:10px;color:#1e1e1e;transform:scaleX(0.9400);">Melgar</span>
<span class="t" style="left:202.98px;top:267.77px;font-size:10px;color:#1e1e1e;transform:scaleX(0.9400);">Female</span>
<span class="t" style="left:263.67px;top:267.77px;font-size:10px;color:#1e1e1e;transform:scaleX(0.9400);">United States</span>
<span class="t" style="left:370.88px;top:267.77px;font-size:10px;color:#1e1e1e;transform:scaleX(0.9500);">27</span>
<span class="t" style="left:385.05px;top:267.77px;font-size:10px;color:#1e1e1e;transform:scaleX(0.9500);">16/08/2016</span>
<span class="t" style="left:481.69px;top:267.77px;font-size:10px;color:#1e1e1e;transform:scaleX(0.9500);">2456</span>
<span class="t" style="left:72.72px;top:280.60px;font-size:10px;color:#1e1e1e;transform:scaleX(0.9500);">9</span>
<span class="t" style="left:81.60px;top:280.60px;font-size:10px;color:#1e1e1e;transform:scaleX(0.9400);">Vincenza</span>
<span class="t" style="left:142.29px;top:280.60px;font-size:10px;color:#1e1e1e;transform:scaleX(0.9400);">Weiland</span>
<span class="t" style="left:202.98px;top:280.60px;font-size:10px;color:#1e1e1e;transform:scaleX(0.9400);">Female</span>
<span class="t" style="left:263.67px;top:280.60px;font-size:10px;color:#1e1e1e;transform:scaleX(0.9400);">United States</span>
<span class="t" style="left:370.88px;top:280.60px;font-size:10px;color:#1e1e1e;transform:scaleX(0.9500);">40</span>
<span class="t" style="left:385.05px;top:280.60px;font-size:10px;color:#1e1e1e;transform:scaleX(0.9500);">21/05/2015</span>
<span class="t" style="left:481.69px;top:280.60px;font-size:10px;color:#1e1e1e;transform:scaleX(0.9500);">6548</span>
<span class="t" style="left:67.43px;top:293.42px;font-size:10px;color:#1e1e1e;transform:scaleX(0.9500);">10</span>
<span class="t" style="left:81.60px;top:293.42px;font-size:10px;color:#1e1e1e;transform:scaleX(0.9400);">Fallon</span>
<span class="t" style="left:142.29px;top:293.42px;font-size:10px;color:#1e1e1e;transform:scaleX(0.9400);">Winward</span>
<span class="t" style="left:202.98px;top:293.42px;font-size:10px;color:#1e1e1e;transform:scaleX(0.9400);">Female</span>
<span class="t" style="left:263.67px;top:293.42px;font-size:10px;color:#1e1e1e;transform:scaleX(0.9400);">Great Britain</span>
<span class="t" style="left:370.88px;top:293.42px;font-size:10px;color:#1e1e1e;transform:scaleX(0.9500);">28</span>
<span class="t" style="left:385.05px;top:293.42px;font-size:10px;color:#1e1e1e;transform:scaleX(0.9500);">16/08/2016</span>
<span class="t" style="left:481.69px;top:293.42px;font-size:10px;color:#1e1e1e;transform:scaleX(0.9500);">5486</span>
<span class="t" style="left:68.13px;top:306.25px;font-size:10px;color:#1e1e1e;transform:scaleX(0.9500);">11</span>
<span class="t" style="left:81.60px;top:306.25px;font-size:10px;color:#1e1e1e;transform:scaleX(0.9400);">Arcelia</span>
<span class="t" style="left:142.29px;top:306.25px;font-size:10px;color:#1e1e1e;transform:scaleX(0.9400);">Bouska</span>
<span class="t" style="left:202.98px;top:306.25px;font-size:10px;color:#1e1e1e;transform:scaleX(0.9400);">Female</span>
<span class="t" style="left:263.67px;top:306.25px;font-size:10px;color:#1e1e1e;transform:scaleX(0.9400);">Great Britain</span>
<span class="t" style="left:370.88px;top:306.25px;font-size:10px;color:#1e1e1e;transform:scaleX(0.9500);">39</span>
<span class="t" style="left:385.05px;top:306.25px;font-size:10px;color:#1e1e1e;transform:scaleX(0.9500);">21/05/2015</span>
<span class="t" style="left:481.69px;top:306.25px;font-size:10px;color:#1e1e1e;transform:scaleX(0.9500);">1258</span>
<span class="t" style="left:67.43px;top:319.07px;font-size:10px;color:#1e1e1e;transform:scaleX(0.9500);">12</span>
<span class="t" style="left:81.60px;top:319.07px;font-size:10px;color:#1e1e1e;transform:scaleX(0.9400);">Franklyn</span>
<span class="t" style="left:142.29px;top:319.07px;font-size:10px;color:#1e1e1e;transform:scaleX(0.9400);">Unknow</span>
<span class="t" style="left:202.98px;top:319.07px;font-size:10px;color:#1e1e1e;transform:scaleX(0.9400);">Male</span>
<span class="t" style="left:263.67px;top:319.07px;font-size:10px;color:#1e1e1e;transform:scaleX(0.9400);">France</span>
<span class="t" style="left:370.88px;top:319.07px;font-size:10px;color:#1e1e1e;transform:scaleX(0.9500);">38</span>
<span class="t" style="left:385.05px;top:319.07px;font-size:10px;color:#1e1e1e;transform:scaleX(0.9500);">15/10/2017</span>
<span class="t" style="left:481.69px;top:319.07px;font-size:10px;color:#1e1e1e;transform:scaleX(0.9500);">2579</span>
<span class="t" style="left:67.43px;top:331.90px;font-size:10px;color:#1e1e1e;transform:scaleX(0.9500);">13</span>
<span class="t" style="left:81.60px;top:331.90px;font-size:10px;color:#1e1e1e;transform:scaleX(0.9400);">Sherron</span>
<span class="t" style="left:142.29px;top:331.90px;font-size:10px;color:#1e1e1e;transform:scaleX(0.9400);">Ascencio</span>
<span class="t" style="left:202.98px;top:331.90px;font-size:10px;color:#1e1e1e;transform:scaleX(0.9400);">Female</span>
<span class="t" style="left:263.67px;top:331.90px;font-size:10px;color:#1e1e1e;transform:scaleX(0.9400);">Great Britain</span>
<span class="t" style="left:370.88px;top:331.90px;font-size:10px;color:#1e1e1e;transform:scaleX(0.9500);">32</span>
<span class="t" style="left:385.05px;top:331.90px;font-size:10px;color:#1e1e1e;transform:scaleX(0.9500);">16/08/2016</span>
<span class="t" style="left:481.69px;top:331.90px;font-size:10px;color:#1e1e1e;transform:scaleX(0.9500);">3256</span>
<span class="t" style="left:67.43px;top:344.73px;font-size:10px;color:#1e1e1e;transform:scaleX(0.9500);">14</span>
<span class="t" style="left:81.60px;top:344.73px;font-size:10px;color:#1e1e1e;transform:scaleX(0.9400);">Marcel</span>
<span class="t" style="left:142.29px;top:344.73px;font-size:10px;color:#1e1e1e;transform:scaleX(0.9400);">Zabriskie</span>
<span class="t" style="left:202.98px;top:344.73px;font-size:10px;color:#1e1e1e;transform:scaleX(0.9400);">Male</span>
<span class="t" style="left:263.67px;top:344.73px;font-size:10px;color:#1e1e1e;transform:scaleX(0.9400);">Great Britain</span>
<span class="t" style="left:370.88px;top:344.73px;font-size:10px;color:#1e1e1e;transform:scaleX(0.9500);">26</span>
<span class="t" style="left:385.05px;top:344.73px;font-size:10px;color:#1e1e1e;transform:scaleX(0.9500);">21/05/2015</span>
<span class="t" style="left:481.69px;top:344.73px;font-size:10px;color:#1e1e1e;transform:scaleX(0.9500);">2587</span>
<span class="t" style="left:67.43px;top:357.55px;font-size:10px;color:#1e1e1e;transform:scaleX(0.9500);">15</span>
<span class="t" style="left:81.60px;top:357.55px;font-size:10px;color:#1e1e1e;transform:scaleX(0.9400);">Kina</span>
<span class="t" style="left:142.29px;top:357.55px;font-size:10px;color:#1e1e1e;transform:scaleX(0.9400);">Hazelton</span>
<span class="t" style="left:202.98px;top:357.55px;font-size:10px;color:#1e1e1e;transform:scaleX(0.9400);">Female</span>
<span class="t" style="left:263.67px;top:357.55px;font-size:10px;color:#1e1e1e;transform:scaleX(0.9400);">Great Britain</span>
<span class="t" style="left:370.88px;top:357.55px;font-size:10px;color:#1e1e1e;transform:scaleX(0.9500);">31</span>
<span class="t" style="left:385.05px;top:357.55px;font-size:10px;color:#1e1e1e;transform:scaleX(0.9500);">16/08/2016</span>
<span class="t" style="left:481.69px;top:357.55px;font-size:10px;color:#1e1e1e;transform:scaleX(0.9500);">3259</span>
<span class="t" style="left:67.43px;top:370.38px;font-size:10px;color:#1e1e1e;transform:scaleX(0.9500);">16</span>
<span class="t" style="left:81.60px;top:370.38px;font-size:10px;color:#1e1e1e;transform:scaleX(0.9400);">Shavonne</span>
<span class="t" style="left:142.29px;top:370.38px;font-size:10px;color:#1e1e1e;transform:scaleX(0.9400);">Pia</span>
<span class="t" style="left:202.98px;top:370.38px;font-size:10px;color:#1e1e1e;transform:scaleX(0.9400);">Female</span>
<span class="t" style="left:263.67px;top:370.38px;font-size:10px;color:#1e1e1e;transform:scaleX(0.9400);">France</span>
<span class="t" style="left:370.88px;top:370.38px;font-size:10px;color:#1e1e1e;transform:scaleX(0.9500);">24</span>
<span class="t" style="left:385.05px;top:370.38px;font-size:10px;color:#1e1e1e;transform:scaleX(0.9500);">21/05/2015</span>
<span class="t" style="left:481.69px;top:370.38px;font-size:10px;color:#1e1e1e;transform:scaleX(0.9500);">1546</span>
<span class="t" style="left:67.43px;top:383.20px;font-size:10px;color:#1e1e1e;transform:scaleX(0.9500);">17</span>
<span class="t" style="left:81.60px;top:383.20px;font-size:10px;color:#1e1e1e;transform:scaleX(0.9400);">Shavon</span>
<span class="t" style="left:142.29px;top:383.20px;font-size:10px;color:#1e1e1e;transform:scaleX(0.9400);">Benito</span>
<span class="t" style="left:202.98px;top:383.20px;font-size:10px;color:#1e1e1e;transform:scaleX(0.9400);">Female</span>
<span class="t" style="left:263.67px;top:383.20px;font-size:10px;color:#1e1e1e;transform:scaleX(0.9400);">France</span>
<span class="t" style="left:370.88px;top:383.20px;font-size:10px;color:#1e1e1e;transform:scaleX(0.9500);">39</span>
<span class="t" style="left:385.05px;top:383.20px;font-size:10px;color:#1e1e1e;transform:scaleX(0.9500);">15/10/2017</span>
<span class="t" style="left:481.69px;top:383.20px;font-size:10px;color:#1e1e1e;transform:scaleX(0.9500);">3579</span>
<span class="t" style="left:67.43px;top:396.03px;font-size:10px;color:#1e1e1e;transform:scaleX(0.9500);">18</span>
<span class="t" style="left:81.60px;top:396.03px;font-size:10px;color:#1e1e1e;transform:scaleX(0.9400);">Lauralee</span>
<span class="t" style="left:142.29px;top:396.03px;font-size:10px;color:#1e1e1e;transform:scaleX(0.9400);">Perrine</span>
<span class="t" style="left:202.98px;top:396.03px;font-size:10px;color:#1e1e1e;transform:scaleX(0.9400);">Female</span>
<span class="t" style="left:263.67px;top:396.03px;font-size:10px;color:#1e1e1e;transform:scaleX(0.9400);">Great Britain</span>
<span class="t" style="left:370.88px;top:396.03px;font-size:10px;color:#1e1e1e;transform:scaleX(0.9500);">28</span>
<span class="t" style="left:385.05px;top:396.03px;font-size:10px;color:#1e1e1e;transform:scaleX(0.9500);">16/08/2016</span>
<span class="t" style="left:481.69px;top:396.03px;font-size:10px;color:#1e1e1e;transform:scaleX(0.9500);">6597</span>
<span class="t" style="left:67.43px;top:408.86px;font-size:10px;color:#1e1e1e;transform:scaleX(0.9500);">19</span>
<span class="t" style="left:81.60px;top:408.86px;font-size:10px;color:#1e1e1e;transform:scaleX(0.9400);">Loreta</span>
<span class="t" style="left:142.29px;top:408.86px;font-size:10px;color:#1e1e1e;transform:scaleX(0.9400);">Curren</span>
<span class="t" style="left:202.98px;top:408.86px;font-size:10px;color:#1e1e1e;transform:scaleX(0.9400);">Female</span>
<span class="t" style="left:263.67px;top:408.86px;font-size:10px;color:#1e1e1e;transform:scaleX(0.9400);">France</span>
<span class="t" style="left:370.88px;top:408.86px;font-size:10px;color:#1e1e1e;transform:scaleX(0.9500);">26</span>
<span class="t" style="left:385.05px;top:408.86px;font-size:10px;color:#1e1e1e;transform:scaleX(0.9500);">21/05/2015</span>
<span class="t" style="left:481.69px;top:408.86px;font-size:10px;color:#1e1e1e;transform:scaleX(0.9500);">9654</span>
<span class="t" style="left:67.43px;top:421.68px;font-size:10px;color:#1e1e1e;transform:scaleX(0.9500);">20</span>
<span class="t" style="left:81.60px;top:421.68px;font-size:10px;color:#1e1e1e;transform:scaleX(0.9400);">Teresa</span>
<span class="t" style="left:142.29px;top:421.68px;font-size:10px;color:#1e1e1e;transform:scaleX(0.9400);">Strawn</span>
<span class="t" style="left:202.98px;top:421.68px;font-size:10px;color:#1e1e1e;transform:scaleX(0.9400);">Female</span>
<span class="t" style="left:263.67px;top:421.68px;font-size:10px;color:#1e1e1e;transform:scaleX(0.9400);">France</span>
<span class="t" style="left:370.88px;top:421.68px;font-size:10px;color:#1e1e1e;transform:scaleX(0.9500);">46</span>
<span class="t" style="left:385.05px;top:421.68px;font-size:10px;color:#1e1e1e;transform:scaleX(0.9500);">21/05/2015</span>
<span class="t" style="left:481.69px;top:421.68px;font-size:10px;color:#1e1e1e;transform:scaleX(0.9500);">3569</span>
<span class="t" style="left:67.43px;top:434.51px;font-size:10px;color:#1e1e1e;transform:scaleX(0.9500);">21</span>
<span class="t" style="left:81.60px;top:434.51px;font-size:10px;color:#1e1e1e;transform:scaleX(0.9400);">Belinda</span>
<span class="t" style="left:142.29px;top:434.51px;font-size:10px;color:#1e1e1e;transform:scaleX(0.9400);">Partain</span>
<span class="t" style="left:202.98px;top:434.51px;font-size:10px;color:#1e1e1e;transform:scaleX(0.9400);">Female</span>
<span class="t" style="left:263.67px;top:434.51px;font-size:10px;color:#1e1e1e;transform:scaleX(0.9400);">United States</span>
<span class="t" style="left:370.88px;top:434.51px;font-size:10px;color:#1e1e1e;transform:scaleX(0.9500);">37</span>
<span class="t" style="left:385.05px;top:434.51px;font-size:10px;color:#1e1e1e;transform:scaleX(0.9500);">15/10/2017</span>
<span class="t" style="left:481.69px;top:434.51px;font-size:10px;color:#1e1e1e;transform:scaleX(0.9500);">2564</span>
<span class="t" style="left:67.43px;top:447.33px;font-size:10px;color:#1e1e1e;transform:scaleX(0.9500);">22</span>
<span class="t" style="left:81.60px;top:447.33px;font-size:10px;color:#1e1e1e;transform:scaleX(0.9400);">Holly</span>
<span class="t" style="left:142.29px;top:447.33px;font-size:10px;color:#1e1e1e;transform:scaleX(0.9400);">Eudy</span>
<span class="t" style="left:202.98px;top:447.33px;font-size:10px;color:#1e1e1e;transform:scaleX(0.9400);">Female</span>
<span class="t" style="left:263.67px;top:447.33px;font-size:10px;color:#1e1e1e;transform:scaleX(0.9400);">United States</span>
<span class="t" style="left:370.88px;top:447.33px;font-size:10px;color:#1e1e1e;transform:scaleX(0.9500);">52</span>
<span class="t" style="left:385.05px;top:447.33px;font-size:10px;color:#1e1e1e;transform:scaleX(0.9500);">16/08/2016</span>
<span class="t" style="left:481.69px;top:447.33px;font-size:10px;color:#1e1e1e;transform:scaleX(0.9500);">8561</span>
<span class="t" style="left:67.43px;top:460.16px;font-size:10px;color:#1e1e1e;transform:scaleX(0.9500);">23</span>
<span class="t" style="left:81.60px;top:460.16px;font-size:10px;color:#1e1e1e;transform:scaleX(0.9400);">Many</span>
<span class="t" style="left:142.29px;top:460.16px;font-size:10px;color:#1e1e1e;transform:scaleX(0.9400);">Cuccia</span>
<span class="t" style="left:202.98px;top:460.16px;font-size:10px;color:#1e1e1e;transform:scaleX(0.9400);">Female</span>
<span class="t" style="left:263.67px;top:460.16px;font-size:10px;color:#1e1e1e;transform:scaleX(0.9400);">Great Britain</span>
<span class="t" style="left:370.88px;top:460.16px;font-size:10px;color:#1e1e1e;transform:scaleX(0.9500);">46</span>
<span class="t" style="left:385.05px;top:460.16px;font-size:10px;color:#1e1e1e;transform:scaleX(0.9500);">21/05/2015</span>
<span class="t" style="left:481.69px;top:460.16px;font-size:10px;color:#1e1e1e;transform:scaleX(0.9500);">5489</span>
<span class="t" style="left:67.43px;top:472.99px;font-size:10px;color:#1e1e1e;transform:scaleX(0.9500);">24</span>
<span class="t" style="left:81.60px;top:472.99px;font-size:10px;color:#1e1e1e;transform:scaleX(0.9400);">Libbie</span>
<span class="t" style="left:142.29px;top:472.99px;font-size:10px;color:#1e1e1e;transform:scaleX(0.9400);">Dalby</span>
<span class="t" style="left:202.98px;top:472.99px;font-size:10px;color:#1e1e1e;transform:scaleX(0.9400);">Female</span>
<span class="t" style="left:263.67px;top:472.99px;font-size:10px;color:#1e1e1e;transform:scaleX(0.9400);">France</span>
<span class="t" style="left:370.88px;top:472.99px;font-size:10px;color:#1e1e1e;transform:scaleX(0.9500);">42</span>
<span class="t" style="left:385.05px;top:472.99px;font-size:10px;color:#1e1e1e;transform:scaleX(0.9500);">21/05/2015</span>
<span class="t" style="left:481.69px;top:472.99px;font-size:10px;color:#1e1e1e;transform:scaleX(0.9500);">5469</span>
<span class="t" style="left:570.30px;top:169.98px;font-size:15.5px;color:#000000;font-weight:bold;transform:scaleX(0.9635);">Select All Data</span>
<span class="t" style="left:129.50px;top:489.88px;font-size:9px;color:#333333;transform:scaleX(0.9740);">942 × 539px</span>
<span class="t" style="left:246.00px;top:489.88px;font-size:9px;color:#333333;transform:scaleX(0.9669);">1343 × 981px</span>
</div>
<div id="over">
<style>
.bh{position:absolute;height:3px;background:#ee3444;}
.bh i{position:absolute;left:0;right:0;top:1px;height:1px;background:repeating-linear-gradient(90deg,#5e4090 0,#5e4090 2.5px,#f8ccd2 2.5px,#f8ccd2 4.7px);}
.bv{position:absolute;width:3px;background:#f2666e;}
.bv i{position:absolute;top:0;bottom:0;left:1px;width:1.5px;background:repeating-linear-gradient(180deg,#8a3478 0,#8a3478 2.2px,#ff7c80 2.2px,#ff7c80 4.8px);}
.hd{position:absolute;width:2px;height:2px;background:#ffffff;border:1px solid #9a9a9a;}
</style>
<div class="a" style="left:19px;top:162px;width:1px;height:322px;background:#3a9a6c"></div><div class="a" style="left:14px;top:162px;width:1px;height:317px;background:#d4e6e2"></div>
<div class="a" style="left:565px;top:479px;width:1px;height:5px;background:#217346"></div>
<div class="bh" style="left:15px;top:162px;width:553px"><i></i></div>
<div class="bh" style="left:15px;top:476px;width:553px"><i></i></div>
<div class="bv" style="left:15px;width:4px;top:162px;height:317px;box-shadow:inset -1px 0 0 #a8483a"><i style="left:1.2px;width:1.8px"></i></div>
<div class="bv" style="left:564px;width:4px;top:162px;height:317px"><i style="left:1.2px;width:1.8px"></i></div>
<div class="hd" style="left:15px;top:162px"></div>
<div class="hd" style="left:564px;top:162px"></div>
<div class="hd" style="left:15px;top:476px"></div>
<div class="hd" style="left:564px;top:476px"></div>
<div class="hd" style="left:290px;top:162px"></div>
<div class="hd" style="left:290px;top:476px"></div>
<div class="hd" style="left:15px;top:319px"></div>
<div class="hd" style="left:564px;top:319px"></div>

</div>
</body></html>
